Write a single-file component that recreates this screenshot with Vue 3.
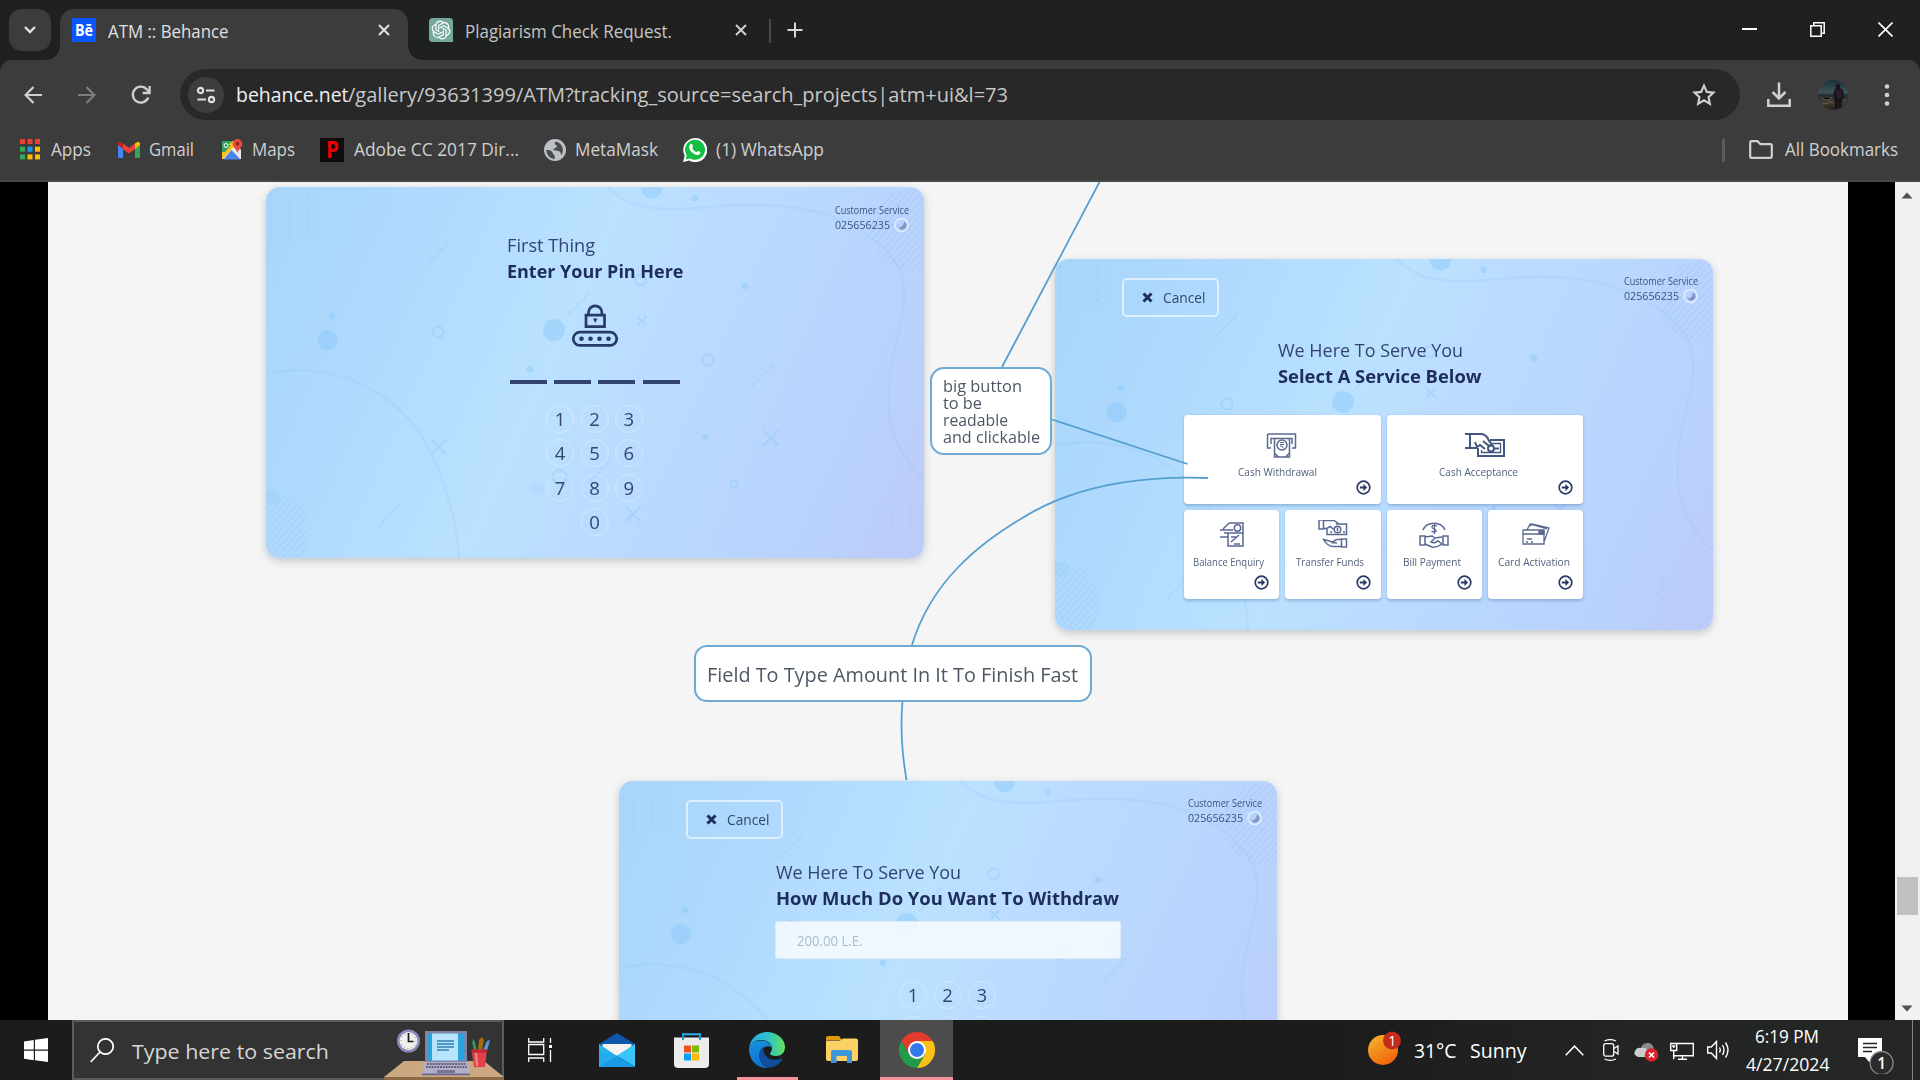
<script setup>
import { h } from 'vue'

// One line of text set to an exact advance width, cap-height centred in its box.
const Fit = (p) =>
  h('svg', { width: p.w, height: p.box || p.size * 1.3, style: { display: 'block', overflow: 'visible', flex: 'none' } }, [
    h('text', {
      x: 0,
      y: (p.box || p.size * 1.3) / 2 + p.size * 0.357 + Number(p.dy || 0),
      textLength: p.w,
      lengthAdjust: 'spacingAndGlyphs',
      'font-size': p.size,
      'font-weight': p.weight || 400,
      fill: p.color || '#d0d0d0'
    }, p.t)
  ])
Fit.props = ['t', 'w', 'size', 'weight', 'color', 'box', 'dy']

const dotsTL = []
for (let r = 0; r < 6; r++) for (let c = 0; c < 6; c++) dotsTL.push([5 + c * 9.2, 8 + r * 8.3])
const dotsBR = []
for (let r = 0; r < 6; r++) for (let c = 0; c < 6; c++) dotsBR.push([608 + c * 9.2, 323 + r * 8.6])
const squiggles = [[160, 78], [300, 130], [484, 201], [112, 340], [322, 296]]
const crosses = [[376, 134, 4.5], [505, 251, 7.5], [173, 260, 7.5], [367, 327, 7.5]]
const rings = [[172, 145, 5.5], [374.5, 93, 5.5], [442, 173, 5.5], [468, 297, 3.5], [293.5, 290, 7]]
const spots = [[385.6, 1, 10.5], [428.7, 11, 3.3], [66, 129, 3.3], [61.6, 153, 10.3], [288, 143, 11], [264, 182, 3.3], [479, 99, 3.3], [439, 250, 3], [271, 301, 7], [6, 310, 8]]

const keys = ['1', '2', '3', '4', '5', '6', '7', '8', '9', '0']
const screens = [
  { id: 'pin', x: 217.5, y: 5, kind: 'pin', left: 241, l1: 'First Thing', w1: 88, l2: 'Enter Your Pin Here', w2: 176.5, keys },
  { id: 'menu', x: 1006.5, y: 76.5, kind: 'menu', cancel: true, left: 223, l1: 'We Here To Serve You', w1: 185, l2: 'Select A Service Below', w2: 203.5 },
  { id: 'amount', x: 570.5, y: 598.5, kind: 'amount', cancel: true, left: 157.5, l1: 'We Here To Serve You', w1: 185, l2: 'How Much Do You Want To Withdraw', w2: 343, keys: ['1', '2', '3', '', '', ''] }
]
const services = [
  { t: 'Cash Withdrawal', w: 79, big: true, i: 'withdraw', off: -5 },
  { t: 'Cash Acceptance', w: 79, big: true, i: 'accept', off: -6 },
  { t: 'Balance Enquiry', w: 71, i: 'balance', off: -3 },
  { t: 'Transfer Funds', w: 68, i: 'transfer', off: -3 },
  { t: 'Bill Payment', w: 58, i: 'bill', off: -2 },
  { t: 'Card Activation', w: 72, i: 'cards', off: -2 }
]
</script>

<template>
  <div class="screen">
    <header class="tabs">
      <div class="tabsearch">
        <svg width="14" height="10" viewBox="0 0 14 10"><path d="M2 2l5 5 5-5" fill="none" stroke="#e3e3e3" stroke-width="2.3" /></svg>
      </div>
      <div class="tab active">
        <div class="be"><Fit t="Bē" w="18" size="16" weight="700" color="#fff" /></div>
        <Fit class="tabname" t="ATM :: Behance" w="120.5" size="18" color="#e0e0e0" dy="1.5" />
        <svg class="x" width="12" height="12"><path d="M1 1l10 10M11 1L1 11" stroke="#e3e3e3" stroke-width="2" /></svg>
      </div>
      <div class="tab second">
        <svg width="24" height="24"><path d="M3.500 0H20.500Q24 0 24 3.500V24H3.500Q0 24 0 20.500V3.500Q0 0 3.500 0z" fill="#74a89b" /><path transform="translate(2.6 2.6) scale(.785)" fill="#fff" d="M22.2819 9.8211a5.9847 5.9847 0 0 0-.5157-4.9108 6.0462 6.0462 0 0 0-6.5098-2.9A6.0651 6.0651 0 0 0 4.9807 4.1818a5.9847 5.9847 0 0 0-3.9977 2.9 6.0462 6.0462 0 0 0 .7427 7.0966 5.98 5.98 0 0 0 .511 4.9107 6.051 6.051 0 0 0 6.5146 2.9001A5.9847 5.9847 0 0 0 13.2599 24a6.0557 6.0557 0 0 0 5.7718-4.2058 5.9894 5.9894 0 0 0 3.9977-2.9001 6.0557 6.0557 0 0 0-.7475-7.0729zm-9.022 12.6081a4.4755 4.4755 0 0 1-2.8764-1.0408l.1419-.0804 4.7783-2.7582a.7948.7948 0 0 0 .3927-.6813v-6.7369l2.02 1.1686a.071.071 0 0 1 .038.052v5.5826a4.504 4.504 0 0 1-4.4945 4.4944zm-9.6607-4.1254a4.4708 4.4708 0 0 1-.5346-3.0137l.142.0852 4.783 2.7582a.7712.7712 0 0 0 .7806 0l5.8428-3.3685v2.3324a.0804.0804 0 0 1-.0332.0615L9.74 19.9502a4.4992 4.4992 0 0 1-6.1408-1.6464zM2.3408 7.8956a4.485 4.485 0 0 1 2.3655-1.9728V11.6a.7664.7664 0 0 0 .3879.6765l5.8144 3.3543-2.0201 1.1685a.0757.0757 0 0 1-.071 0l-4.8303-2.7865A4.504 4.504 0 0 1 2.3408 7.872zm16.5963 3.8558L13.1038 8.364 15.1192 7.2a.0757.0757 0 0 1 .071 0l4.8303 2.7913a4.4944 4.4944 0 0 1-.6765 8.1042v-5.6772a.79.79 0 0 0-.407-.667zm2.0107-3.0231l-.142-.0852-4.7735-2.7818a.7759.7759 0 0 0-.7854 0L9.409 9.2297V6.8974a.0662.0662 0 0 1 .0284-.0615l4.8303-2.7866a4.4992 4.4992 0 0 1 6.6802 4.66zM8.3065 12.863l-2.02-1.1638a.0804.0804 0 0 1-.038-.0567V6.0742a4.4992 4.4992 0 0 1 7.3757-3.4537l-.142.0805L8.704 5.459a.7948.7948 0 0 0-.3927.6813zm1.0976-2.3654l2.602-1.4998 2.6069 1.4998v2.9994l-2.5974 1.4997-2.6067-1.4997Z" /></svg>
        <Fit class="tabname" t="Plagiarism Check Request." w="207" size="18" color="#c4c6c4" dy="1.5" />
        <svg class="x" width="12" height="12"><path d="M1 1l10 10M11 1L1 11" stroke="#d0d0d0" stroke-width="2" /></svg>
      </div>
      <div class="tabsep"></div>
      <svg class="plus" width="16" height="16"><path d="M8 .5v15M.5 8h15" stroke="#d6d6d6" stroke-width="2" /></svg>
      <div class="wincontrols">
        <svg width="15" height="15"><path d="M0 7h15" stroke="#fff" stroke-width="2" /></svg>
        <svg width="15" height="15" fill="none" stroke="#fff" stroke-width="1.5"><path d="M.8 3.8h10.4v10.4H.8zM3.8 3.5V.8h10.4v10.4h-3" /></svg>
        <svg width="15" height="15"><path d="M.5.5l14 14M14.500.5l-14 14" stroke="#fff" stroke-width="1.6" /></svg>
      </div>
    </header>

    <div class="chrome">
      <div class="navrow">
        <svg width="18" height="18" fill="none" stroke="#d0d0d0" stroke-width="2.2"><path d="M18 9H2M9.500 1L1.600 9l7.900 8" /></svg>
        <svg width="18" height="18" fill="none" stroke="#7d7d7d" stroke-width="2.200"><path d="M0 9h16M8.500 1l7.900 8-7.900 8" /></svg>
        <svg class="reload" width="20" height="20" fill="none" stroke="#d0d0d0" stroke-width="2.300"><path d="M17.300 12.500A8 8 0 1 1 16 4.500L18 7" /><path d="M18.600 1v7h-7" /></svg>
        <div class="omnibox">
          <div class="site">
            <svg width="20" height="18" fill="none" stroke="#e0e0e0" stroke-width="2.100"><circle cx="4.500" cy="4.500" r="2.600" /><path d="M10 4.500h8.500M1.500 13.500H10" /><circle cx="15.500" cy="13.500" r="2.600" /></svg>
          </div>
          <Fit t="behance.net" w="112.5" size="20.500" color="#f0f0f0" />
          <Fit t="/gallery/93631399/ATM?tracking_source=search_projects|atm+ui&amp;l=73" w="660" size="20.500" color="#c7c7c7" />
          <svg class="star" width="24" height="24" viewBox="0 0 24 24"><path d="M12 2.600l2.800 6.300 6.700.7-5 4.500 1.400 6.700-5.900-3.500-5.900 3.500 1.400-6.700-5-4.500 6.700-.7z" fill="none" stroke="#d0d0d0" stroke-width="2.100" /></svg>
        </div>
        <svg class="dl" width="24" height="25" fill="none" stroke="#d0d0d0" stroke-width="2.500"><path d="M12 .5v15M5.500 10l6.500 6.500 6.500-6.500M1.300 17v6.700h21.400V17" /></svg>
        <svg class="avatar" width="30" height="30">
          <defs><clipPath id="av"><circle cx="15" cy="15" r="15" /></clipPath><linearGradient id="avg" x2="0" y2="1"><stop offset="0" stop-color="#173039" /><stop offset=".42" stop-color="#40545a" /><stop offset=".5" stop-color="#222e33" /><stop offset=".75" stop-color="#403c30" /><stop offset="1" stop-color="#201e18" /></linearGradient></defs>
          <g clip-path="url(#av)"><rect width="30" height="30" fill="url(#avg)" /><path d="M3 18l6 2 5-2M4 24l7-1M11 21l4 2M22 18l5 2" stroke="#655f4e" /><path d="M18 5a2.500 2.500 0 0 1 4 0v3l3 2 1 8-2 2-1 10h-2l-1-8-1 8h-2l-.5-10-1-8 2-3z" fill="#17121d" /><path d="M17 10l6-1 1 9h-5z" fill="#2b1c28" /></g>
        </svg>
        <svg class="more" width="6" height="24" fill="#d0d0d0"><circle cx="3" cy="3.500" r="2.300" /><circle cx="3" cy="12" r="2.300" /><circle cx="3" cy="20.500" r="2.300" /></svg>
      </div>
      <nav class="bookmarks">
        <svg class="apps" width="20" height="21"><g v-for="(c, n) in ['#ea4335','#ea4335','#ea4335','#34a853','#1a9bf0','#fbbc04','#34a853','#fbbc04','#fbbc04']" :key="n"><rect :x="(n % 3) * 7.5" :y="Math.floor(n / 3) * 7.7" width="5" height="5" :fill="c" /></g></svg>
        <Fit class="g11" t="Apps" w="40" size="17.500" />
        <svg class="g26" width="22" height="17"><path d="M0 2v13.500Q0 17 1.500 17H5V6z" fill="#4285f4" /><path d="M22 2v13.500Q22 17 20.500 17H17V6z" fill="#34a853" /><path d="M17 2.500V8l5-4V2.500Q21-1 17 2.500z" fill="#fbbc04" /><path d="M5 2.500V8L0 4V2.500Q1-1 5 2.500z" fill="#c5221f" /><path d="M5 2.500l6 4.500 6-4.500V8l-6 4.500L5 8z" fill="#ea4335" /></svg>
        <Fit class="g10" t="Gmail" w="45" size="17.500" />
        <svg class="g26" width="22" height="23" viewBox="0 0 22 23"><path d="M1 3h14l-5 9H1z" fill="#34a060" /><path d="M1 12L13 3l7 9v9H2z" fill="#e9e9e6" /><path d="M1 12L12 3l3 3L2 21H1z" fill="#fbc31b" /><path d="M1 7h9L4 14H1z" fill="#34a060" /><path d="M10.500 12l9 9.500h-17z" fill="#4a86ea" /><circle cx="5" cy="7.500" r="2" fill="none" stroke="#fff" /><path d="M16.500 1a4.800 4.800 0 0 1 4.800 4.800c0 3.600-3.700 5-4.800 9.200-1.100-4.200-4.800-5.600-4.800-9.200A4.800 4.800 0 0 1 16.500 1z" fill="#e14b3d" /><circle cx="16.500" cy="5.800" r="1.700" fill="#8d2019" /></svg>
        <Fit class="g10" t="Maps" w="43" size="17.500" />
        <div class="pbox"><Fit t="P" w="13" size="23" weight="700" color="#f00000" /></div>
        <Fit class="g10" t="Adobe CC 2017 Dir..." w="165" size="17.500" />
        <svg class="g25" width="22" height="22"><circle cx="11" cy="11" r="11" fill="#bdc1c6" /><path d="M2.200 11c3 0 6 .5 6.500 3 .3 1.800 2 1.700 2 3.500v2.700A9.200 9.200 0 0 1 2.200 11zM12 2.500c-2 1-1.500 3 0 3.500s1 2 0 2.700-3 .5-2.500 2 5 .5 6.500 2 0 2.800 1.500 3.300A9 9 0 0 0 12 2.500z" fill="#4a4b4d" /></svg>
        <Fit class="g10" t="MetaMask" w="83" size="17.500" />
        <svg class="g25" width="24" height="24" viewBox="0 0 24 24"><path d="M0 24l1.700-6.200A12 12 0 1 1 6.200 22.400z" fill="#fff" /><path d="M2.700 21.300l1-4A10 10 0 1 1 7 20.400z" fill="#14c043" /><path d="M7.400 6.300c.8-.8 1.500-.6 1.900.3l.7 1.700c.2.700-.7 1.300-.9 1.800.9 1.900 2.200 3.200 4.200 4.100.7-.2 1.200-1.400 1.800-1.300l2.300 1.200c.3 1.600-1 2.900-2.900 2.900-3.800-.3-8.300-4.600-8.300-8.100 0-1 .5-2 1.200-2.600z" fill="#fff" /></svg>
        <Fit class="g9" t="(1) WhatsApp" w="108" size="17.500" />
        <div class="allbm">
          <i></i>
          <svg width="24" height="19" fill="none" stroke="#d0d0d0" stroke-width="2.200"><path d="M1.200 2.500Q1.200 1.200 2.500 1.200h6l3 3h9.800q1.500 0 1.500 1.400v10.900q0 1.300-1.300 1.300h-19q-1.300 0-1.300-1.300z" /></svg>
          <Fit t="All Bookmarks" w="113" size="17.500" />
        </div>
      </nav>
    </div>

    <main class="viewport">
      <div class="board">
        <article v-for="s in screens" :key="s.id" class="card" :style="{ left: s.x + 'px', top: s.y + 'px' }">
          <svg class="art" width="658" height="371">
            <defs>
              <clipPath :id="'c' + s.id"><rect width="658" height="371" rx="14" /></clipPath>
              <pattern :id="'h' + s.id" width="5" height="5" patternUnits="userSpaceOnUse" patternTransform="rotate(42)"><path d="M0 0v5" stroke="#8fb8f2" stroke-width="2.200" /></pattern>
            </defs>
            <g :clip-path="'url(#c' + s.id + ')'">
              <circle cx="645" cy="43" r="41" :fill="'url(#h' + s.id + ')'" opacity=".3" />
              <circle cx="3" cy="345" r="42" :fill="'url(#h' + s.id + ')'" opacity=".3" />
              <g fill="none" stroke="#93c3f3" stroke-width="2.500" opacity=".2">
                <path d="M341 0C353 9 360 17 380 20 420 26 455 16 495 18 535 19 570 28 595 44 625 62 642 83 638 118 634 150 620 180 623 222 626 255 642 278 658 292" />
                <path d="M0 187C35 179 75 184 107 203 150 229 166 262 178 298 187 326 192 345 193 371" />
              </g>
              <g fill="#85c7f7" opacity=".42"><circle v-for="(p, n) in spots" :key="n" :cx="p[0]" :cy="p[1]" :r="p[2]" :opacity="n > 7 ? .35 : 1" /></g>
              <g fill="none" stroke="#82c4f4" stroke-width="2" opacity=".34">
                <circle v-for="(p, n) in rings" :key="n" :cx="p[0]" :cy="p[1]" :r="p[2]" />
                <path v-for="(p, n) in crosses" :key="'x' + n" :d="`M${p[0] - p[2]} ${p[1] - p[2]}l${2 * p[2]} ${2 * p[2]}m0 ${-2 * p[2]}l${-2 * p[2]} ${2 * p[2]}`" />
                <path v-for="(p, n) in squiggles" :key="'s' + n" :d="`M${p[0]} ${p[1]}q3-1 4-4t4-4 4-4 4-4 3-3 4-4`" stroke-width="1.500" opacity=".7" />
              </g>
              <g fill="#7fb6ee" opacity=".28"><circle v-for="(p, n) in dotsTL.concat(dotsBR)" :key="n" :cx="p[0]" :cy="p[1]" r="1.100" /></g>
            </g>
          </svg>

          <div class="inner">
            <div class="cardhead">
              <div v-if="s.cancel" class="cancel">
                <svg width="11" height="11"><path d="M1.500 1.500l8 8M9.500 1.500l-8 8" stroke="#1f2d5c" stroke-width="3" /></svg>
                <Fit t="Cancel" w="42.500" size="15" color="#33466f" dy="1" />
              </div>
              <div class="support">
                <Fit t="Customer Service" w="74" size="10.500" box="15" color="#40517d" />
                <div class="phone">
                  <Fit t="025656235" w="55" size="10.500" box="15" color="#40517d" />
                  <svg width="15" height="15"><circle cx="7.500" cy="7" r="6.500" fill="none" stroke="#e0efff" stroke-width="1.500" /><path d="M10 3.500a4.300 4.300 0 1 1-5.500 6Q9.500 9 10 3.500z" fill="#8596c3" /></svg>
                </div>
              </div>
            </div>

            <div class="title" :class="{ low: s.cancel }" :style="{ marginLeft: s.left + 'px' }">
              <Fit :t="s.l1" :w="s.w1" size="18.500" box="25" color="#33456f" />
              <Fit :t="s.l2" :w="s.w2" size="18.500" box="25" weight="700" color="#1f2d5c" dy=".5" />
            </div>

            <template v-if="s.kind === 'pin'">
              <svg class="lock" width="46" height="43" fill="none" stroke="#293a68" stroke-width="2.700"><path d="M14 11.200h18.500v11.500H14zM16.500 11V8.500a6.700 6.700 0 0 1 13.400 0V11" /><rect x="1.300" y="28.200" width="43.400" height="13.200" rx="6.600" /><path d="M21 14.500h4.500l-2.200 4.500z" fill="#293a68" stroke="none" /><g fill="#293a68" stroke="none"><circle cx="9.500" cy="34.800" r="2.300" /><circle cx="18.500" cy="34.800" r="2.300" /><circle cx="27.500" cy="34.800" r="2.300" /><circle cx="36.500" cy="34.800" r="2.300" /></g></svg>
              <div class="blanks"><i></i><i></i><i></i><i></i></div>
            </template>

            <div v-if="s.kind === 'amount'" class="field"><Fit t="200.00 L.E." w="65.500" size="14.500" color="#a9bccb" dy="1" /></div>

            <div v-if="s.kind !== 'menu'" class="keypad" :class="s.kind">
              <span v-for="(k, n) in s.keys" :key="n">{{ k }}</span>
            </div>

            <div v-else class="services">
              <div v-for="v in services" :key="v.t" class="service" :class="{ big: v.big }">
                <svg width="42" height="30" fill="none" stroke="#5a6990" stroke-width="1.500">
                  <g v-if="v.i === 'withdraw'"><path d="M6.500 4h28v14H31M10 18H6.500V4M10 14V8.500h21V14M13.500 8.500V27h15V8.500M13.500 23l4 4M28.500 23l-4 4" /><circle cx="21" cy="15" r="5" /><path d="M19 12.500h4M19 14.500h4M19 16h2l1.500 2.500" stroke-width="1" /></g>
                  <g v-if="v.i === 'accept'" stroke="#44557f" stroke-width="2"><path d="M1 4h17q5 1 7 7l3 3-3 2-6-5M6 4v13M1 18h12M11 12l2 5 3-2 5 4" /><path d="M26 10h14V26H14v-8" /><path d="M29 13.500h7.500v9H17.500V20" stroke-width="1.300" /><circle cx="27" cy="18.500" r="3" /><path d="M31 18.500h4" /></g>
                  <g v-if="v.i === 'balance'"><path d="M18 3h14v23H17V13M18 3l-6 6M9 10h13M9 17h8M13 13h19M20 22l8-7M20 17h5M23 24h6" /><circle cx="26.500" cy="8" r="3.200" /></g>
                  <g v-if="v.i === 'transfer'"><path d="M7 0h4.500v9H7zM11.500.5H22l5 3.500M11.500 8.500h3l4-2 3 3" /><path d="M24 4h10.500v10.500H15V9" /><circle cx="25.500" cy="9.500" r="3.300" /><path d="M25.500 7.500v4M18 12h2M31 12h2" /><path d="M29.500 19h5v8h-5zM29.500 19.500h-5l-4 2.500-9-2.500q4 7 10 7h8M19 22.500l6 .5" /></g>
                  <g v-if="v.i === 'bill'"><path d="M10 10C14 1 28 1 32 10M7 16h5v9H7zM30 16h5v9h-5zM12 17l7-1 3 2 7-1M12 24l7 3q4 1 10-3M22 18l-4 4 3 1 4-2 4 3" /><path d="M24 6c-6-2-6 2-3 3s3 4-2.500 2.500M21.500 3v11" stroke-width="1.300" /></g>
                  <g v-if="v.i === 'cards'" stroke-width="1.300"><path d="M8 10h21v14H8zM12 10l3-6 17 5M15 6l2-2 17 4-5 14M8 14h21M12 19h5M11 22h2M16 22h2M24 12h5" /><path d="M24 11h5v3h-5z" fill="#5a6990" /></g>
                </svg>
                <div class="svclabel" :style="{ marginLeft: 2 * v.off + 'px' }"><Fit :t="v.t" :w="v.w" size="10.500" box="12" color="#52617f" /></div>
                <svg class="go" width="15" height="15" fill="none" stroke="#2b3a66" stroke-width="1.700"><circle cx="7.500" cy="7.500" r="6.300" /><path d="M3.800 7.500H9" stroke-width="2" /><path d="M7.400 4l3.800 3.500L7.400 11z" fill="#2b3a66" stroke="none" /></svg>
              </div>
            </div>
          </div>
        </article>

        <svg class="wires" width="1799" height="838" fill="none" stroke="#559fd0" stroke-width="1.800">
          <path d="M1051.500 0L954 185M1004 237.500l135.500 44.500M1160 296C1080 293 1020 308 976 335 930 362 883 400 864 463M854.500 519C852 548 854 572 858.500 598" />
        </svg>

        <div class="note small">
          <Fit t="big button" w="79" size="16.500" box="17.200" color="#4c5866" />
          <Fit t="to be" w="39" size="16.500" box="17.200" color="#4c5866" />
          <Fit t="readable" w="65" size="16.500" box="17.200" color="#4c5866" />
          <Fit t="and clickable" w="97" size="16.500" box="17.200" color="#4c5866" />
        </div>
        <div class="note wide"><Fit t="Field To Type Amount In It To Finish Fast" w="371" size="20.500" color="#4c5866" dy="1" /></div>
      </div>
      <div class="scroll">
        <svg width="25" height="838"><path d="M6.500 16.500h11L12 10.500zM6.500 823.500h11L12 829.500z" fill="#505050" /><rect x="2" y="695" width="21" height="38" fill="#c1c1c1" /></svg>
      </div>
    </main>

    <footer class="taskbar">
      <svg class="win" width="24" height="24" fill="#fff"><path d="M0 3.500L9.800 2v9.500H0zM11 1.800L24 0v11.500H11zM0 12.700h9.800v9.500L0 20.800zM11 12.700h13V24l-13-1.800z" /></svg>
      <div class="search">
        <svg width="24" height="25" fill="none" stroke="#fff" stroke-width="1.700"><circle cx="15.500" cy="8.500" r="7.700" /><path d="M10 14L.7 24" /></svg>
        <Fit class="stext" t="Type here to search" w="197" size="20" color="#d6d6d6" dy="2" />
        <svg class="desk" width="120" height="56" viewBox="0 2 120 56">
          <path d="M20 39h80l20 16H0z" fill="#cba882" /><path d="M0 55h120v5H0z" fill="#8b6a45" />
          <circle cx="24.500" cy="19" r="11.500" fill="#8e88b8" /><circle cx="24.500" cy="19" r="9" fill="#f1f0ee" /><circle cx="24.500" cy="19" r="7.500" fill="none" stroke="#888" stroke-dasharray="1 2.900" /><path d="M24.500 11v8.500h5" stroke="#181818" stroke-width="1.700" fill="none" />
          <path d="M41 9h42v31H41z" fill="#87839f" /><path d="M43.500 11.500h37v27h-37z" fill="#29a4df" /><path d="M48 11.500h26v27H48z" fill="#b7e4fd" /><path d="M53 19h17M53 22h17M53 25h17M53 28h12" stroke="#317fae" stroke-width="1.300" />
          <path d="M41 40h43l2 12H38z" fill="#b2b0c9" /><path d="M43 42h39M42 45h41" stroke="#66647e" stroke-width="1.800" stroke-dasharray="2 .8" /><path d="M53 48h18v3H53z" fill="#77749a" /><path d="M38 51.500h48v1.800H38z" fill="#69668a" />
          <path d="M90 28l-2-8 2-3 3 11z" fill="#2f9957" /><path d="M94 28l1-10q3-5 5 0l-2 10z" fill="#a06b12" /><path d="M99 28l4-9 3-1-3 11z" fill="#4d9ede" /><path d="M87.500 27.500h15.500l-2 17.500h-11z" fill="#e24149" /><path d="M87.500 27.500h15.500v3H87.500z" fill="#bf2936" /><path d="M92 31l1 13" stroke="#f8898d" stroke-width="2" />
        </svg>
      </div>
      <svg class="tv" width="24" height="24" fill="none" stroke="#fff" stroke-width="1.300"><path d="M.7 0v4h15V0M.7 6.500h15v10H.7zM.7 24v-4h15v4M22.500 0v5M22.500 12v12" /><path d="M21 7h3v3h-3z" fill="#fff" stroke="none" /></svg>
      <svg class="mail" width="36" height="34"><path d="M0 11L18 0l18 11v8H0z" fill="#0d58a8" /><path d="M3.500 11h29v13h-29z" fill="#f3f3f3" /><path d="M0 11l18 12v11H0z" fill="#28b2ef" /><path d="M18 22.500L36 11v23z" fill="#38c6f6" /><path d="M18 22.500L36 34H0z" fill="#1b9ae6" /><path d="M0 34V20l18 2.500z" fill="#24abed" /></svg>
      <svg class="store" width="35" height="35"><path d="M9 7V1.200h17V7" fill="none" stroke="#29b4ec" stroke-width="2" /><path d="M0 4.500h35V31q0 4-4 4H4q-4 0-4-4z" fill="#ececec" /><path d="M9 1.200V7M26 1.200V7" stroke="#1f9bdf" stroke-width="2" /><path d="M10 12.500h7v7h-7z" fill="#f25022" /><path d="M18 12.500h7v7h-7z" fill="#7fba00" /><path d="M10 20.500h7v7h-7z" fill="#00a4ef" /><path d="M18 20.500h7v7h-7z" fill="#ffb900" /></svg>
      <div class="app edge">
        <svg width="36" height="36" viewBox="0 0 36 36">
          <defs><linearGradient id="e1"><stop stop-color="#2aa6e5" /><stop offset=".55" stop-color="#2fc3c5" /><stop offset="1" stop-color="#64e25a" /></linearGradient><linearGradient id="e2" x2=".3" y2="1"><stop stop-color="#1b93e0" /><stop offset="1" stop-color="#0b6fd0" /></linearGradient></defs>
          <path d="M0 17C1 6 9 0 18 0c10 0 18 7 18 15 0 6-4 9-9 9-4 0-6-1-6-2.500 0-1 2-2 2-5C23 12 18 8 11.500 8 5 8 1 12 0 17z" fill="url(#e1)" />
          <path d="M0 17C1 12 5 8.500 11.500 8.500 17 8.500 22 12 22.500 15c-7-3-13 3-12 10 .8 6 5 10 9 11C8 37 0 28 0 17z" fill="url(#e2)" />
          <path d="M14.500 15c-6 4-5 12-1 16.500 3 3.500 7 4.500 9 3.700 5-1 9-4.500 11-8 0-.8-.5-.8-1.200-.5C24 30 13 26 14.500 15z" fill="#104f9e" />
        </svg>
      </div>
      <svg class="folder" width="32" height="28"><path d="M0 2Q0 0 2 0h11l3 4H0z" fill="#dd9c0c" /><path d="M0 4.500h14l3-2h13q2 0 2 2V23q0 2-2 2H2q-2 0-2-2z" fill="#fcd163" /><path d="M5 27V16q0-2 2-2h17q2 0 2 2v11h-5v-7H10.500v7z" fill="#3b96db" /></svg>
      <div class="app gc">
        <svg width="36" height="36" viewBox="-18 -18 36 36"><path d="M-15.600-9A18 18 0 0 1 15.600-9H0L-7.800 4.500z" fill="#e33b2e" /><path d="M15.600-9A18 18 0 0 1 0 18L7.800 4.500 0-9z" fill="#fbc116" /><path d="M0 18A18 18 0 0 1-15.600-9L-7.800 4.500H7.800z" fill="#229a49" /><circle r="9" fill="#fff" /><circle r="7" fill="#3279ee" /></svg>
      </div>
      <div class="tray">
        <svg class="sun" width="33" height="34"><defs><linearGradient id="sn" x2=".6" y2="1"><stop stop-color="#f3ba2e" /><stop offset="1" stop-color="#f3650b" /></linearGradient></defs><circle cx="15" cy="19" r="15" fill="url(#sn)" /><circle cx="24" cy="9.500" r="9" fill="#c42b1c" /><text x="20.300" y="14.500" font-size="14" fill="#fff">1</text></svg>
        <Fit class="temp" t="31°C" w="42.500" size="19.500" color="#fff" dy="1" />
        <Fit class="cond" t="Sunny" w="56.500" size="19.500" color="#fff" dy="1" />
        <svg class="chev" width="19" height="11" fill="none" stroke="#fff" stroke-width="1.500"><path d="M.7 10.300L9.500 1.200l8.800 9.100" /></svg>
        <svg class="cam" width="16" height="22" fill="none" stroke="#fff" stroke-width="1.300"><rect x=".7" y="4.700" width="10" height="12.500" rx="2" /><path d="M11 9.500l4-2.500v8l-4-2.500M1.500 2Q7-.8 13 2M1.500 20q5.500 2.700 11.500 0" /></svg>
        <svg class="cloud" width="25" height="21"><path d="M6 9q2-8 9-7 4 1 5 6 2 3 0 6H8z" fill="#8b8b8b" /><path d="M4 16q-5-2-3-6 2-4 6-3 6-1 7 4l-1 5z" fill="#cdcdcd" /><circle cx="17.500" cy="14" r="6.700" fill="#d8232f" /><path d="M15 11.500l5 5m0-5l-5 5" stroke="#fff" stroke-width="1.700" /></svg>
        <svg class="net" width="24" height="19" fill="none" stroke="#fff" stroke-width="1.400"><path d="M7 2.500h16.300v12.300H4M12.500 15v3M8 18.200h9" /><path d="M.7 2.500h6v7h-6zM3.700 9.500v8.700M2 5h3.500M3.700 5v2" /></svg>
        <svg class="vol" width="23" height="20" fill="none" stroke="#fff" stroke-width="1.400"><path d="M.7 7h3.500L9.500 1.500v17L4.200 13H.7z" /><path d="M12.500 7.500q1.500 2.500 0 5M15.500 5q3 5 0 10M18.500 2.500q5 7.500 0 15" /></svg>
        <div class="clock">
          <Fit t="6:19 PM" w="64" size="17.500" box="28.300" color="#fff" dy=".5" />
          <Fit t="4/27/2024" w="83.500" size="17.500" box="28.300" color="#fff" dy=".5" />
        </div>
        <svg class="bell" width="37" height="36"><path d="M0 0h24v19H16l-5 5-4-5H0z" fill="#fff" /><path d="M5 5.500h14M5 9.500h14M5 13.500h9" stroke="#222" stroke-width="1.300" /><circle cx="23.600" cy="25" r="11.500" fill="#2b2b2b" stroke="#8a8a8a" stroke-width="1.300" /><text x="19.200" y="30.500" font-size="15.500" font-weight="600" fill="#fff">1</text></svg>
        <div class="peek"></div>
      </div>
    </footer>
  </div>
</template>

<style>
body { margin: 0; overflow: hidden; background: #000; }
</style>

<style scoped>
.screen { width: 1920px; height: 1080px; display: flex; flex-direction: column; overflow: hidden; background: #1f2120; font-family: "Open Sans", "Noto Sans", sans-serif; }
svg { display: block; flex: none; }
.tabs { height: 60px; box-sizing: border-box; padding-left: 9px; background: #1f2120; display: flex; align-items: flex-start; flex: none; }
.tabsearch { width: 42px; height: 42px; margin-top: 9px; border-radius: 13px; background: #3c3c3c; display: flex; align-items: center; justify-content: center; }
.tab { height: 51px; margin-top: 9px; padding-bottom: 9px; box-sizing: border-box; display: flex; align-items: center; position: relative; }
.tab.active { width: 348px; margin-left: 9px; padding-left: 12px; padding-right: 18px; background: #3c3c3c; border-radius: 14px 14px 0 0; }
.tab.active::before, .tab.active::after { content: ""; position: absolute; bottom: 0; width: 14px; height: 14px; }
.tab.active::before { left: -14px; background: radial-gradient(circle at 0 0, transparent 13.5px, #3c3c3c 14px); }
.tab.active::after { right: -14px; background: radial-gradient(circle at 100% 0, transparent 13.5px, #3c3c3c 14px); }
.tab.second { width: 339px; padding-left: 21px; }
.be { width: 24px; height: 24px; background: #0a57ff; display: flex; align-items: center; justify-content: center; }
.tabname { margin-left: 11.5px; }
.x { margin-left: auto; }
.tabsep { width: 2px; height: 24px; margin: 19px 17px 0 22px; background: #4a4a4a; }
.plus { margin-top: 22px; margin-left: -1px; }
.wincontrols { margin-left: auto; margin-top: 22px; margin-right: 27px; display: flex; gap: 53px; }
.chrome { height: 122px; flex: none; border-radius: 12px 12px 0 0; background: linear-gradient(#3c3c3c 120px, #484848 120px); }
.navrow { height: 60px; padding-top: 9px; box-sizing: border-box; display: flex; align-items: center; }
.navrow > svg:first-child { margin-left: 24px; margin-right: 36px; }
.reload { margin-left: 35px; margin-right: 29px; }
.omnibox { width: 1560px; height: 51px; border-radius: 26px; background: #282828; display: flex; align-items: center; }
.site { width: 36px; height: 36px; margin-left: 8px; margin-right: 11.5px; border-radius: 50%; background: #3d3d3d; display: flex; align-items: center; justify-content: center; }
.star { margin-left: auto; margin-right: 24px; }
.dl { margin-left: 27px; margin-right: 27px; }
.more { margin-left: 36px; }
.bookmarks { height: 60px; margin-top: -0.5px; display: flex; align-items: center; }
.apps { margin-left: 20px; }
.g9 { margin-left: 8.5px; }
.g10 { margin-left: 9.5px; }
.g11 { margin-left: 11px; }
.g25 { margin-left: 25px; }
.g26 { margin-left: 26.5px; }
.pbox { width: 24px; height: 24px; margin-left: 25px; background: #100c0c; display: flex; align-items: center; justify-content: center; }
.allbm { margin-left: auto; margin-right: 22px; display: flex; align-items: center; }
.allbm i { width: 3px; height: 24px; border-radius: 2px; background: #5c5c5c; margin-right: 24px; }
.allbm svg { margin-right: 12px; }
.allbm svg:last-child { margin-right: 0; }

.viewport { height: 838px; flex: none; display: flex; background: #000; padding-left: 48px; }
.board { width: 1799.5px; height: 838px; background: #f5f5f5; position: relative; overflow: hidden; flex: none; }
.scroll { width: 25px; margin-left: 47.5px; background: #f1f1f1; flex: none; }
.card { position: absolute; width: 658px; height: 371px; border-radius: 14px; background: linear-gradient(114deg, #a7d5fb 0%, #b0dafd 22%, #bae1ff 44%, #bbdcff 56%, #bad7fe 70%, #b9d2fc 86%, #bdcbfb 97%); box-shadow: 0 3px 9px rgba(60, 80, 90, .28); }
.art { position: absolute; left: 0; top: 0; filter: blur(.4px); }
.inner { position: relative; height: 371px; display: flex; flex-direction: column; filter: blur(.5px); }
.cardhead { height: 46px; padding: 0 15px 0 67px; display: flex; align-items: flex-start; flex: none; }
.cancel { width: 97px; height: 39px; margin-top: 19px; box-sizing: border-box; border: 2px solid #deefff; border-radius: 5px; display: flex; align-items: center; gap: 10px; padding-left: 18px; }
.support { margin-left: auto; margin-top: 15.5px; }
.phone { display: flex; gap: 4px; }
.title.low { margin-top: 33px; }
.lock { margin: 21px 0 0 306px; }
.blanks { margin: 33px 0 21px 244px; display: flex; gap: 7.4px; }
.blanks i { width: 37px; height: 3.5px; background: #33446f; }
.keypad { width: 97px; margin-left: 280.5px; display: flex; flex-wrap: wrap; gap: 6.5px 6.4px; justify-content: center; }
.keypad.amount { margin-top: 22px; }
.keypad span { width: 28px; height: 28px; box-sizing: border-box; border: 1px solid rgba(224, 240, 255, .6); border-radius: 50%; display: flex; align-items: center; justify-content: center; font-size: 18.5px; font-weight: 500; color: #34466f; line-height: 28px; }
.field { width: 346px; height: 38.5px; margin: 11px 0 0 156.5px; padding-left: 20.5px; box-sizing: border-box; background: rgba(255, 255, 255, .78); border: 1px solid rgba(220, 232, 244, .9); border-radius: 3px; display: flex; align-items: center; flex: none; }
.services { margin: 27px 0 0 129.5px; width: 400px; display: grid; grid-template-columns: repeat(4, 95.3px); grid-auto-rows: 89px; gap: 6px; }
.service { background: #fff; border-radius: 4px; box-shadow: 0 1.5px 3px rgba(80, 120, 170, .4); display: flex; flex-direction: column; align-items: center; padding-top: 10px; box-sizing: border-box; }
.service.big { grid-column: span 2; padding-top: 15px; }
.svclabel { margin-top: 6.5px; }
.go { align-self: flex-end; margin: 6.5px 10px 0 0; }
.big .go { margin-top: 2px; }
.wires { position: absolute; left: 0; top: 0; filter: blur(.3px); }
.note { position: absolute; box-sizing: border-box; background: #fff; border: 2px solid #6faad3; filter: blur(.35px); }
.note.small { left: 881.500px; top: 184.500px; width: 122.500px; height: 88.500px; border-radius: 14px; padding: 8px 0 0 11px; }
.note.wide { left: 645.500px; top: 462.500px; width: 398.500px; height: 57px; border-radius: 13px; display: flex; align-items: center; padding-left: 11.500px; }

.taskbar { height: 60px; flex: none; background: linear-gradient(90deg, #1c1c1c 70%, #232424 85%, #252626); display: flex; align-items: center; }
.win { margin: 0 24px; }
.search { width: 432px; height: 60px; box-sizing: border-box; border: 2px solid #5b5b5b; background: #333; display: flex; align-items: center; padding-left: 16px; }
.stext { margin-left: 18px; }
.desk { margin-left: auto; margin-right: -2px; align-self: flex-end; margin-bottom: -2px; }
.tv { margin-left: 24px; }
.mail { margin-left: 47px; }
.store { margin-left: 39px; }
.app { height: 60px; box-sizing: border-box; border-bottom: 3px solid #f79299; display: flex; align-items: center; justify-content: center; padding-top: 3px; }
.edge { width: 61px; margin-left: 27.5px; }
.folder { margin-left: 28px; }
.gc { width: 73px; margin-left: 22.5px; background: #4c4c4c; }
.tray { margin-left: auto; height: 60px; display: flex; align-items: center; }
.sun { margin-right: 12.500px; margin-top: -4px; }
.cond { margin-left: 14px; }
.chev { margin-left: 38px; }
.cam { margin-left: 19px; }
.cloud { margin-left: 15px; margin-top: 3px; }
.net { margin-left: 11px; }
.vol { margin-left: 13px; }
.clock { margin-left: 16px; display: flex; flex-direction: column; align-items: center; }
.bell { margin-left: 28.500px; margin-top: 12px; }
.peek { width: 1.500px; height: 60px; background: #858585; margin: 0 7px 0 17px; }
</style>
